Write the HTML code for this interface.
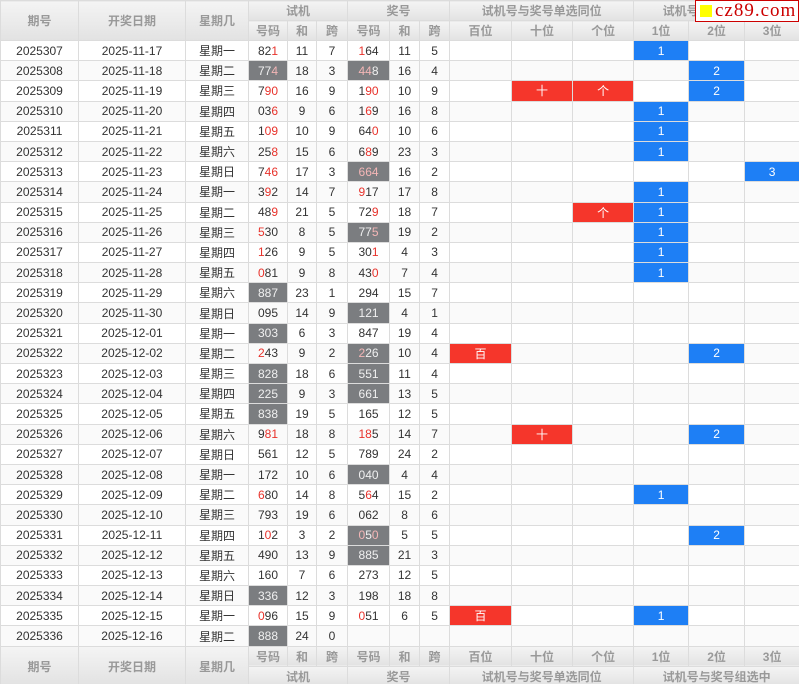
<!DOCTYPE html>
<html><head><meta charset="utf-8">
<style>
html,body{margin:0;padding:0;background:#fff;width:799px;height:684px;overflow:hidden}
table{border-collapse:collapse;table-layout:fixed;width:799px;font-family:"Liberation Sans","Noto Sans CJK SC",sans-serif;font-size:12px;color:#333}
td,th{border:1px solid #dcdcdc;text-align:center;padding:0;white-space:nowrap;overflow:hidden}
th{background:linear-gradient(#f4f4f4,#e2e2e2);color:#999;font-weight:bold;height:19px}
tbody tr{height:20.2px}
tbody tr:nth-child(even) td{background:#fafafa}
td.g{background:#7b7d80!important;color:#f0f0f0}
td.g r{color:#f4b6b6}
r{color:#e8322b}
td.k{border-left:1px solid #000}
td.R{background:#f5362b!important;color:#fff}
td.B{background:#1e7ff5!important;color:#fff}
.logo{position:absolute;left:695px;top:0;width:102px;height:20px;border:1px solid #c00;background:#fff;font-family:"Liberation Serif",serif;color:#c00;font-size:19px;letter-spacing:1px;line-height:20px;white-space:nowrap}
.logo i{display:inline-block;width:12px;height:12px;background:#ff0;margin:0 3px 0 4px;vertical-align:-1px}
</style></head><body>
<table>
<colgroup><col style="width:78px"><col style="width:107px"><col style="width:63px"><col style="width:39px"><col style="width:29px"><col style="width:31px"><col style="width:42px"><col style="width:30px"><col style="width:30px"><col style="width:62px"><col style="width:61px"><col style="width:61px"><col style="width:55px"><col style="width:56px"><col style="width:55px"></colgroup>
<thead>
<tr><th rowspan="2">期号</th><th rowspan="2">开奖日期</th><th rowspan="2">星期几</th><th colspan="3">试机</th><th colspan="3">奖号</th><th colspan="3">试机号与奖号单选同位</th><th colspan="3">试机号与奖号组选中</th></tr>
<tr><th>号码</th><th>和</th><th>跨</th><th>号码</th><th>和</th><th>跨</th><th>百位</th><th>十位</th><th>个位</th><th>1位</th><th>2位</th><th>3位</th></tr>
</thead>
<tbody>
<tr><td>2025307</td><td>2025-11-17</td><td>星期一</td><td>82<r>1</r></td><td>11</td><td>7</td><td class="k"><r>1</r>64</td><td>11</td><td>5</td><td class="k"></td><td></td><td></td><td class="k B">1</td><td></td><td></td></tr>
<tr><td>2025308</td><td>2025-11-18</td><td>星期二</td><td class="g">77<r>4</r></td><td>18</td><td>3</td><td class="k g"><r>44</r>8</td><td>16</td><td>4</td><td class="k"></td><td></td><td></td><td class="k"></td><td class="B">2</td><td></td></tr>
<tr><td>2025309</td><td>2025-11-19</td><td>星期三</td><td>7<r>90</r></td><td>16</td><td>9</td><td class="k">1<r>90</r></td><td>10</td><td>9</td><td class="k"></td><td class="R">十</td><td class="R">个</td><td class="k"></td><td class="B">2</td><td></td></tr>
<tr><td>2025310</td><td>2025-11-20</td><td>星期四</td><td>03<r>6</r></td><td>9</td><td>6</td><td class="k">1<r>6</r>9</td><td>16</td><td>8</td><td class="k"></td><td></td><td></td><td class="k B">1</td><td></td><td></td></tr>
<tr><td>2025311</td><td>2025-11-21</td><td>星期五</td><td>1<r>09</r></td><td>10</td><td>9</td><td class="k">64<r>0</r></td><td>10</td><td>6</td><td class="k"></td><td></td><td></td><td class="k B">1</td><td></td><td></td></tr>
<tr><td>2025312</td><td>2025-11-22</td><td>星期六</td><td>25<r>8</r></td><td>15</td><td>6</td><td class="k">6<r>8</r>9</td><td>23</td><td>3</td><td class="k"></td><td></td><td></td><td class="k B">1</td><td></td><td></td></tr>
<tr><td>2025313</td><td>2025-11-23</td><td>星期日</td><td>7<r>46</r></td><td>17</td><td>3</td><td class="k g"><r>664</r></td><td>16</td><td>2</td><td class="k"></td><td></td><td></td><td class="k"></td><td></td><td class="B">3</td></tr>
<tr><td>2025314</td><td>2025-11-24</td><td>星期一</td><td>3<r>9</r>2</td><td>14</td><td>7</td><td class="k"><r>9</r>17</td><td>17</td><td>8</td><td class="k"></td><td></td><td></td><td class="k B">1</td><td></td><td></td></tr>
<tr><td>2025315</td><td>2025-11-25</td><td>星期二</td><td>48<r>9</r></td><td>21</td><td>5</td><td class="k">72<r>9</r></td><td>18</td><td>7</td><td class="k"></td><td></td><td class="R">个</td><td class="k B">1</td><td></td><td></td></tr>
<tr><td>2025316</td><td>2025-11-26</td><td>星期三</td><td><r>5</r>30</td><td>8</td><td>5</td><td class="k g">77<r>5</r></td><td>19</td><td>2</td><td class="k"></td><td></td><td></td><td class="k B">1</td><td></td><td></td></tr>
<tr><td>2025317</td><td>2025-11-27</td><td>星期四</td><td><r>1</r>26</td><td>9</td><td>5</td><td class="k">30<r>1</r></td><td>4</td><td>3</td><td class="k"></td><td></td><td></td><td class="k B">1</td><td></td><td></td></tr>
<tr><td>2025318</td><td>2025-11-28</td><td>星期五</td><td><r>0</r>81</td><td>9</td><td>8</td><td class="k">43<r>0</r></td><td>7</td><td>4</td><td class="k"></td><td></td><td></td><td class="k B">1</td><td></td><td></td></tr>
<tr><td>2025319</td><td>2025-11-29</td><td>星期六</td><td class="g">887</td><td>23</td><td>1</td><td class="k">294</td><td>15</td><td>7</td><td class="k"></td><td></td><td></td><td class="k"></td><td></td><td></td></tr>
<tr><td>2025320</td><td>2025-11-30</td><td>星期日</td><td>095</td><td>14</td><td>9</td><td class="k g">121</td><td>4</td><td>1</td><td class="k"></td><td></td><td></td><td class="k"></td><td></td><td></td></tr>
<tr><td>2025321</td><td>2025-12-01</td><td>星期一</td><td class="g">303</td><td>6</td><td>3</td><td class="k">847</td><td>19</td><td>4</td><td class="k"></td><td></td><td></td><td class="k"></td><td></td><td></td></tr>
<tr><td>2025322</td><td>2025-12-02</td><td>星期二</td><td><r>2</r>43</td><td>9</td><td>2</td><td class="k g"><r>2</r>26</td><td>10</td><td>4</td><td class="k R">百</td><td></td><td></td><td class="k"></td><td class="B">2</td><td></td></tr>
<tr><td>2025323</td><td>2025-12-03</td><td>星期三</td><td class="g">828</td><td>18</td><td>6</td><td class="k g">551</td><td>11</td><td>4</td><td class="k"></td><td></td><td></td><td class="k"></td><td></td><td></td></tr>
<tr><td>2025324</td><td>2025-12-04</td><td>星期四</td><td class="g">225</td><td>9</td><td>3</td><td class="k g">661</td><td>13</td><td>5</td><td class="k"></td><td></td><td></td><td class="k"></td><td></td><td></td></tr>
<tr><td>2025325</td><td>2025-12-05</td><td>星期五</td><td class="g">838</td><td>19</td><td>5</td><td class="k">165</td><td>12</td><td>5</td><td class="k"></td><td></td><td></td><td class="k"></td><td></td><td></td></tr>
<tr><td>2025326</td><td>2025-12-06</td><td>星期六</td><td>9<r>81</r></td><td>18</td><td>8</td><td class="k"><r>18</r>5</td><td>14</td><td>7</td><td class="k"></td><td class="R">十</td><td></td><td class="k"></td><td class="B">2</td><td></td></tr>
<tr><td>2025327</td><td>2025-12-07</td><td>星期日</td><td>561</td><td>12</td><td>5</td><td class="k">789</td><td>24</td><td>2</td><td class="k"></td><td></td><td></td><td class="k"></td><td></td><td></td></tr>
<tr><td>2025328</td><td>2025-12-08</td><td>星期一</td><td>172</td><td>10</td><td>6</td><td class="k g">040</td><td>4</td><td>4</td><td class="k"></td><td></td><td></td><td class="k"></td><td></td><td></td></tr>
<tr><td>2025329</td><td>2025-12-09</td><td>星期二</td><td><r>6</r>80</td><td>14</td><td>8</td><td class="k">5<r>6</r>4</td><td>15</td><td>2</td><td class="k"></td><td></td><td></td><td class="k B">1</td><td></td><td></td></tr>
<tr><td>2025330</td><td>2025-12-10</td><td>星期三</td><td>793</td><td>19</td><td>6</td><td class="k">062</td><td>8</td><td>6</td><td class="k"></td><td></td><td></td><td class="k"></td><td></td><td></td></tr>
<tr><td>2025331</td><td>2025-12-11</td><td>星期四</td><td>1<r>0</r>2</td><td>3</td><td>2</td><td class="k g"><r>0</r>5<r>0</r></td><td>5</td><td>5</td><td class="k"></td><td></td><td></td><td class="k"></td><td class="B">2</td><td></td></tr>
<tr><td>2025332</td><td>2025-12-12</td><td>星期五</td><td>490</td><td>13</td><td>9</td><td class="k g">885</td><td>21</td><td>3</td><td class="k"></td><td></td><td></td><td class="k"></td><td></td><td></td></tr>
<tr><td>2025333</td><td>2025-12-13</td><td>星期六</td><td>160</td><td>7</td><td>6</td><td class="k">273</td><td>12</td><td>5</td><td class="k"></td><td></td><td></td><td class="k"></td><td></td><td></td></tr>
<tr><td>2025334</td><td>2025-12-14</td><td>星期日</td><td class="g">336</td><td>12</td><td>3</td><td class="k">198</td><td>18</td><td>8</td><td class="k"></td><td></td><td></td><td class="k"></td><td></td><td></td></tr>
<tr><td>2025335</td><td>2025-12-15</td><td>星期一</td><td><r>0</r>96</td><td>15</td><td>9</td><td class="k"><r>0</r>51</td><td>6</td><td>5</td><td class="k R">百</td><td></td><td></td><td class="k B">1</td><td></td><td></td></tr>
<tr><td>2025336</td><td>2025-12-16</td><td>星期二</td><td class="g">888</td><td>24</td><td>0</td><td class="k"></td><td></td><td></td><td class="k"></td><td></td><td></td><td class="k"></td><td></td><td></td></tr>
</tbody>
<tfoot>
<tr><th rowspan="2">期号</th><th rowspan="2">开奖日期</th><th rowspan="2">星期几</th><th>号码</th><th>和</th><th>跨</th><th>号码</th><th>和</th><th>跨</th><th>百位</th><th>十位</th><th>个位</th><th>1位</th><th>2位</th><th>3位</th></tr>
<tr><th colspan="3">试机</th><th colspan="3">奖号</th><th colspan="3">试机号与奖号单选同位</th><th colspan="3">试机号与奖号组选中</th></tr>
</tfoot>
</table>
<div class="logo"><i></i>cz89.com</div>
</body></html>
